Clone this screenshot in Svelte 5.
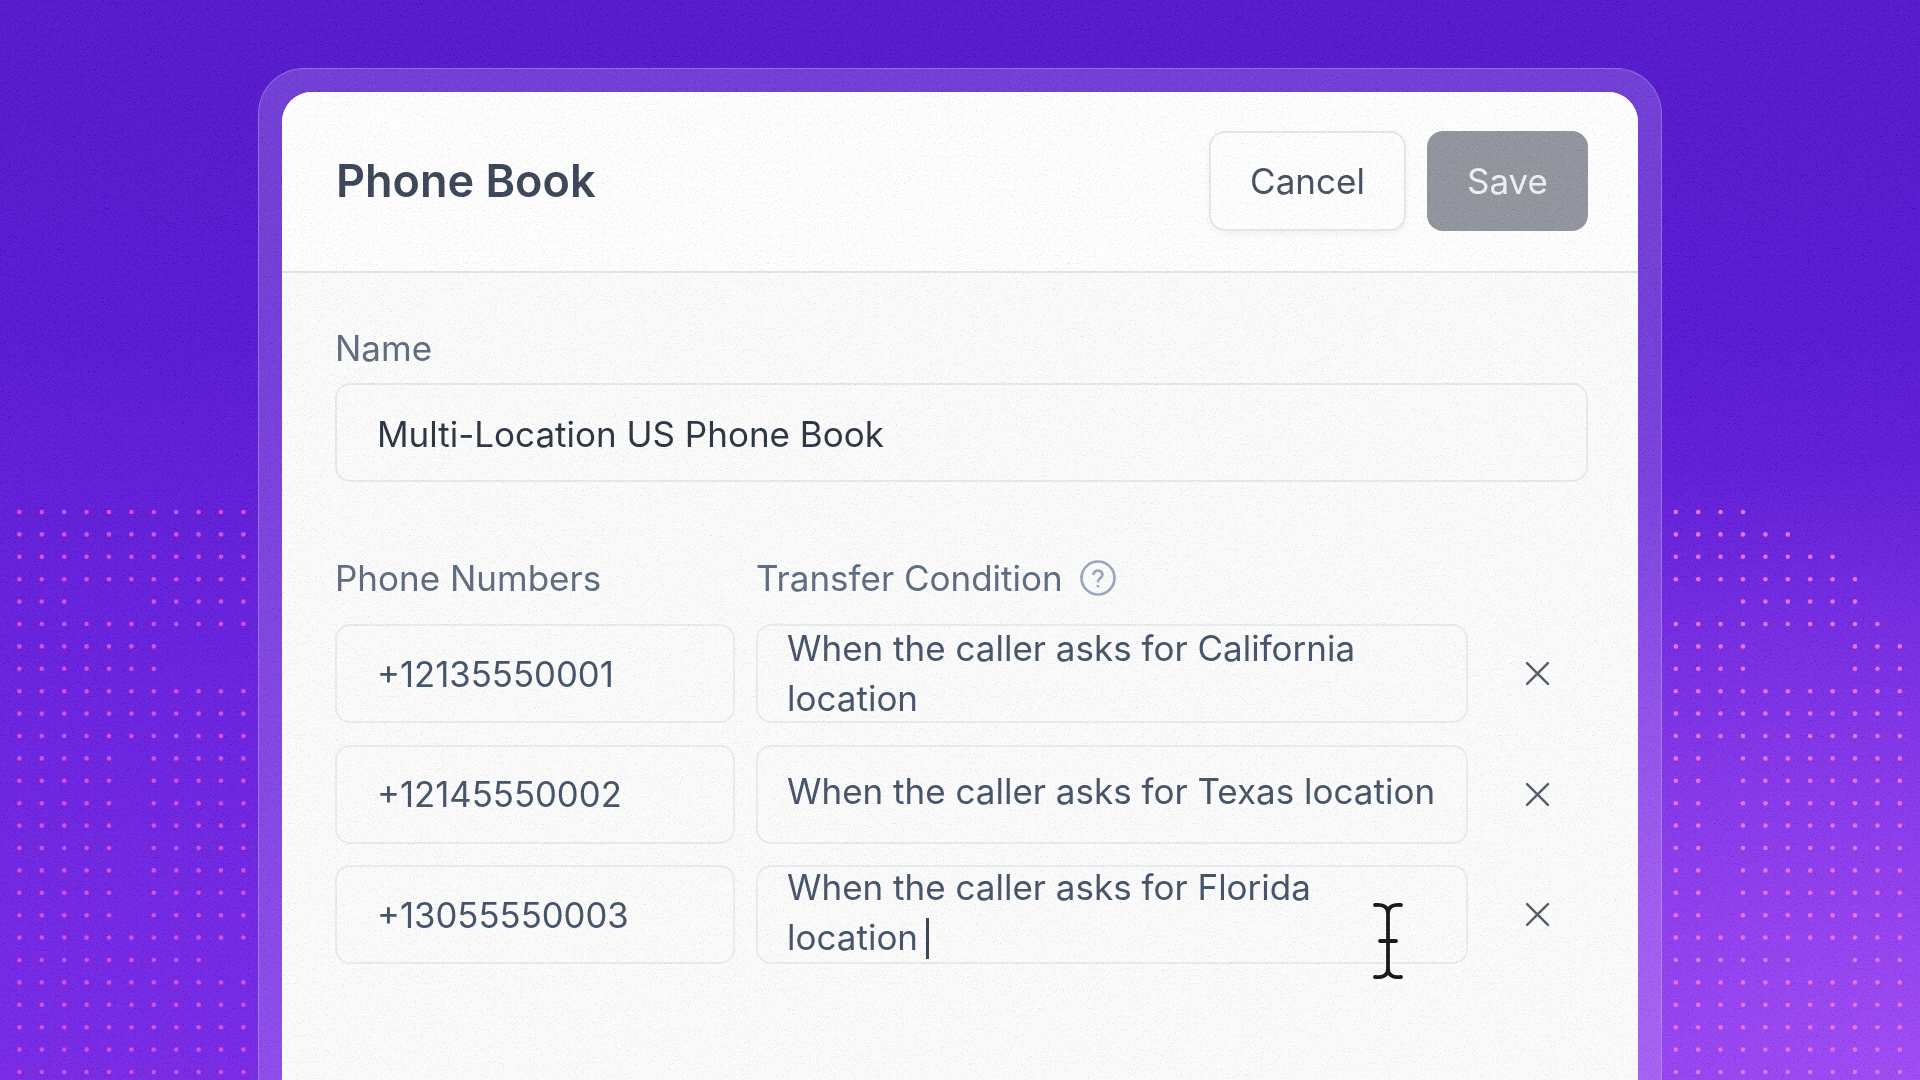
<script>
	const rows = [
		{ phone: '+12135550001', text: 'When the caller asks for California location' },
		{ phone: '+12145550002', text: 'When the caller asks for Texas location', raised: true },
		{ phone: '+13055550003', text: 'When the caller asks for Florida location', active: true }
	];

	// dotted backdrop: holes in the grid, per side, as row -> missing columns
	const holesLeft = {
		4: [3, 4, 5],
		6: [7, 8, 9, 10],
		7: [7, 8, 9, 10],
		11: [5], 12: [5], 13: [5], 14: [5], 15: [5], 16: [5], 17: [5], 18: [5],
		20: [9, 10]
	};
	const holesRight = {
		0: [4, 5, 6, 7, 8, 9, 10],
		1: [6, 7, 8, 9, 10],
		2: [8, 9, 10],
		3: [9, 10],
		4: [0, 1, 2, 9, 10],
		5: [10],
		6: [4, 5, 6, 7],
		7: [4, 5, 6, 7],
		11: [2], 12: [2], 13: [2], 14: [2], 15: [2], 16: [2], 17: [2], 18: [2],
		20: [6, 7]
	};

	function grid(startX, holes) {
		const out = [];
		for (let r = 0; r < 26; r++) {
			for (let c = 0; c < 11; c++) {
				if (holes[r]?.includes(c)) continue;
				out.push({ x: startX + c * 22.4, y: 512 + r * 22.4 });
			}
		}
		return out;
	}

	const dotsLeft = grid(19.4, holesLeft);
	const dotsRight = grid(1675.8, holesRight);
</script>

<div class="page">
	<svg class="dots" width="1920" height="1080" aria-hidden="true">
		<defs>
			<filter id="soft" x="-50%" y="-50%" width="200%" height="200%">
				<feGaussianBlur stdDeviation="0.5" />
			</filter>
		</defs>
		<g filter="url(#soft)">
			{#each dotsLeft as d}
				<circle cx={d.x} cy={d.y} r="2.3" fill="#d542e6" />
			{/each}
			{#each dotsRight as d}
				<circle cx={d.x} cy={d.y} r="2.3" fill="#e868e6" />
			{/each}
		</g>
	</svg>

	<div class="glass">
		<div class="card">
			<header class="head">
				<h1>Phone Book</h1>
				<div class="actions">
					<button class="btn cancel">Cancel</button>
					<button class="btn save">Save</button>
				</div>
			</header>

			<div class="body">
				<label class="label" for="book-name">Name</label>
				<input id="book-name" class="field name" value="Multi-Location US Phone Book" />

				<div class="cols">
					<span class="label">Phone Numbers</span>
					<span class="label with-help">
						Transfer Condition
						<svg class="help" viewBox="0 0 24 24" fill="none" stroke="currentColor" stroke-width="1.8" stroke-linecap="round" stroke-linejoin="round">
							<circle cx="12" cy="12" r="11" />
							<path d="M9 9.2a3.1 3.1 0 0 1 6 .6c0 2-3 2.6-3 4.4" />
							<path d="M12 17.4v.1" />
						</svg>
					</span>
				</div>

				<div class="rows">
					{#each rows as row}
						<div class="row">
							<input class="field phone" value={row.phone} />
							<div class="field cond" class:active={row.active} class:raised={row.raised}>
								<span>{row.text}{#if row.active}<i class="caret"></i>{/if}</span>
							</div>
							<button class="remove" aria-label="Remove">
								<svg viewBox="0 0 24 24" fill="none" stroke="currentColor" stroke-width="2.4" stroke-linecap="round">
									<path d="M2 2l20 20M22 2L2 22" />
								</svg>
							</button>
						</div>
					{/each}
				</div>
			</div>
		</div>
	</div>

	<svg class="ibeam" viewBox="0 0 36 82" fill="none" stroke-linecap="round" aria-hidden="true">
		<g stroke="#fff" stroke-width="7" opacity="0.9">
			<path d="M5 5C13 4 18 7 18 13C18 7 23 4 31 5M18 13V69M5 77C13 78 18 75 18 69C18 75 23 78 31 77M10 41H26" />
		</g>
		<g stroke="#0b0b0b" stroke-width="3.8">
			<path d="M5 5C13 4 18 7 18 13C18 7 23 4 31 5M18 13V69M5 77C13 78 18 75 18 69C18 75 23 78 31 77M10 41H26" />
		</g>
	</svg>

	<svg class="grain" width="1920" height="1080" aria-hidden="true">
		<filter id="noise">
			<feTurbulence type="fractalNoise" baseFrequency="0.85" numOctaves="2" seed="4" />
			<feColorMatrix type="matrix" values="1.8 1.8 1.8 0 -1.9  1.8 1.8 1.8 0 -1.9  1.8 1.8 1.8 0 -1.9  0 0 0 0 0.08" />
		</filter>
		<rect width="1920" height="1080" filter="url(#noise)" />
	</svg>
</div>

<style>
	:global(body) {
		margin: 0;
		font-family: Inter, 'Liberation Sans', sans-serif;
	}
	.page {
		position: relative;
		height: 1080px;
		overflow: hidden;
		padding-top: 68px;
		box-sizing: border-box;
		background:
			radial-gradient(1100px 620px at 100% 100%, rgba(168, 76, 250, 0.75), rgba(168, 76, 250, 0) 100%),
			linear-gradient(180deg, #4c0ccb 0%, #500dd0 30%, #6015dc 60%, #701ee6 100%);
	}
	.dots,
	.grain {
		position: absolute;
		top: 0;
		left: 0;
		pointer-events: none;
	}
	.glass {
		position: relative;
		box-sizing: border-box;
		width: 1404px;
		margin: 0 auto;
		padding: 23px 23px 0;
		height: 1100px;
		border: 1px solid rgba(255, 255, 255, 0.24);
		border-radius: 46px;
		background: rgba(255, 255, 255, 0.16);
		filter: blur(0.35px);
	}
	.card {
		height: 100%;
		background: #fcfcfc;
		border-radius: 30px;
	}
	.head {
		display: flex;
		align-items: center;
		justify-content: space-between;
		height: 181px;
		box-sizing: border-box;
		padding: 0 50px 2px 54px;
		background: #fff;
		border-radius: 30px 30px 0 0;
		border-bottom: 2px solid #e4e4e6;
	}
	h1 {
		margin: 0;
		font-size: 45px;
		font-weight: 600;
		color: #2f3b4e;
	}
	.actions {
		display: flex;
		gap: 21px;
	}
	.btn {
		height: 100px;
		font: 400 35px Inter, sans-serif;
		border-radius: 16px;
		cursor: pointer;
	}
	.cancel {
		width: 197px;
		background: #fff;
		border: 2px solid #e6e6e8;
		color: #3a4658;
		box-shadow: 0 3px 6px rgba(0, 0, 0, 0.05);
	}
	.save {
		width: 161px;
		background: #8b8f98;
		border: 0;
		color: #eef0f2;
	}
	.body {
		padding: 50px 50px 0 53px;
	}
	.label {
		display: block;
		font-size: 35px;
		line-height: 50px;
		color: #566378;
	}
	.field {
		box-sizing: border-box;
		height: 99px;
		background: #fcfcfc;
		border: 2px solid #eaebed;
		border-radius: 15px;
		font: 400 35px Inter, sans-serif;
		color: #3a4a60;
		outline: none;
	}
	.name {
		display: block;
		width: 100%;
		margin-top: 10px;
		padding: 3px 40px 0;
		color: #1f2937;
		border-color: #e5e9f0;
	}
	.cols {
		display: grid;
		grid-template-columns: 400px 1fr;
		gap: 21px;
		margin-top: 71px;
	}
	.with-help {
		display: flex;
		align-items: center;
		gap: 17px;
	}
	.help {
		width: 36px;
		height: 36px;
		color: #94a3b8;
	}
	.rows {
		display: flex;
		flex-direction: column;
		gap: 21.5px;
		margin-top: 21px;
	}
	.row {
		display: grid;
		grid-template-columns: 400px 712px 96px;
		gap: 21px;
	}
	.phone {
		width: 100%;
		padding: 0 40px;
		font-size: 34.7px;
	}
	.cond {
		display: flex;
		align-items: center;
		padding: 0 29px 1px;
		line-height: 50px;
		overflow: hidden;
	}
	.cond.active {
		padding-bottom: 6px;
	}
	.cond.raised {
		padding-bottom: 7px;
	}
	.caret {
		display: inline-block;
		width: 3px;
		height: 41px;
		margin-left: 8px;
		vertical-align: -9px;
		background: #2d3a50;
	}
	.remove {
		display: flex;
		align-items: center;
		justify-content: center;
		padding: 0;
		background: none;
		border: 0;
		color: #4b5563;
	}
	.remove svg {
		width: 25px;
		height: 25px;
	}
	.ibeam {
		position: absolute;
		left: 1370px;
		top: 900px;
		width: 36px;
		height: 82px;
	}
</style>
